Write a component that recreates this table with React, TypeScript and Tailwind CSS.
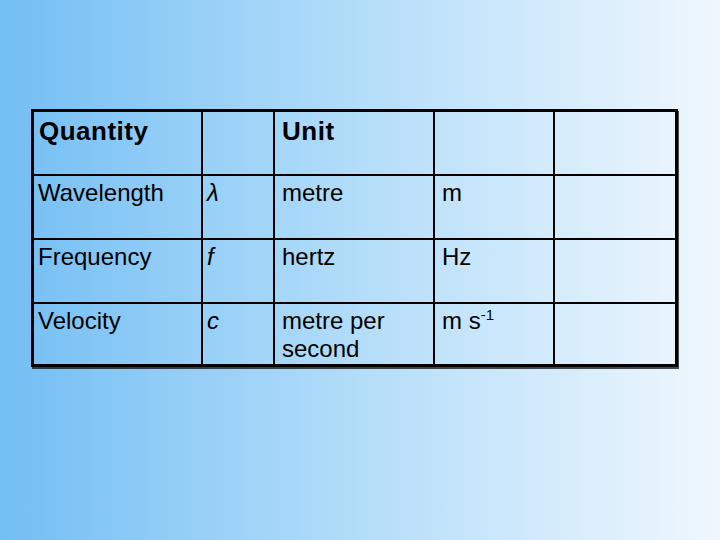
const rows = [
  { q: "Wavelength", s: "λ", u: "metre", abbr: <>m</> },
  { q: "Frequency", s: "f", u: "hertz", abbr: <>Hz</> },
  {
    q: "Velocity",
    s: "c",
    u: (
      <>
        metre per
        <br />
        second
      </>
    ),
    abbr: (
      <>
        m s<sup className="relative -top-[9px] text-[15px] leading-none">-1</sup>
      </>
    ),
  },
];

export default function App() {
  const cell = "border-black text-[24px] leading-[28px]";
  return (
    <main
      className="h-[540px] w-[720px] bg-gradient-to-r from-[#72bef4] via-[#b3ddf9] to-[#f0f7fd] pl-[31px] pt-[109px] text-black"
      style={{ fontFamily: '"Liberation Sans", Arial, sans-serif' }}
    >
      <div className="grid w-[647px] grid-cols-[169px_72px_160px_120px_120px] grid-rows-[64px_64px_64px_60px] border-[3px] border-black shadow-[1px_2px_0_rgba(0,0,0,0.7)]">
        <div className={`${cell} border-r-2 border-b-2 pl-[5px] pt-[5px] text-[26px] font-bold tracking-[0.5px]`}>
          Quantity
        </div>
        <div className={`${cell} border-r-2 border-b-2`} />
        <div className={`${cell} border-r-2 border-b-2 pl-[7px] pt-[5px] text-[26px] font-bold tracking-[0.5px]`}>
          Unit
        </div>
        <div className={`${cell} border-r-2 border-b-2`} />
        <div className={`${cell} border-b-2`} />

        {rows.map((r, i) => {
          const b = i < rows.length - 1 ? "border-b-2" : "";
          return (
            <div key={r.q} className="contents">
              <div className={`${cell} ${b} border-r-2 pl-[4px] pt-[3px]`}>{r.q}</div>
              <div className={`${cell} ${b} border-r-2 pl-[4px] pt-[3px] italic`}>{r.s}</div>
              <div className={`${cell} ${b} border-r-2 pl-[7px] pt-[3px]`}>{r.u}</div>
              <div className={`${cell} ${b} border-r-2 pl-[7px] pt-[3px]`}>{r.abbr}</div>
              <div className={`${cell} ${b}`} />
            </div>
          );
        })}
      </div>
    </main>
  );
}
